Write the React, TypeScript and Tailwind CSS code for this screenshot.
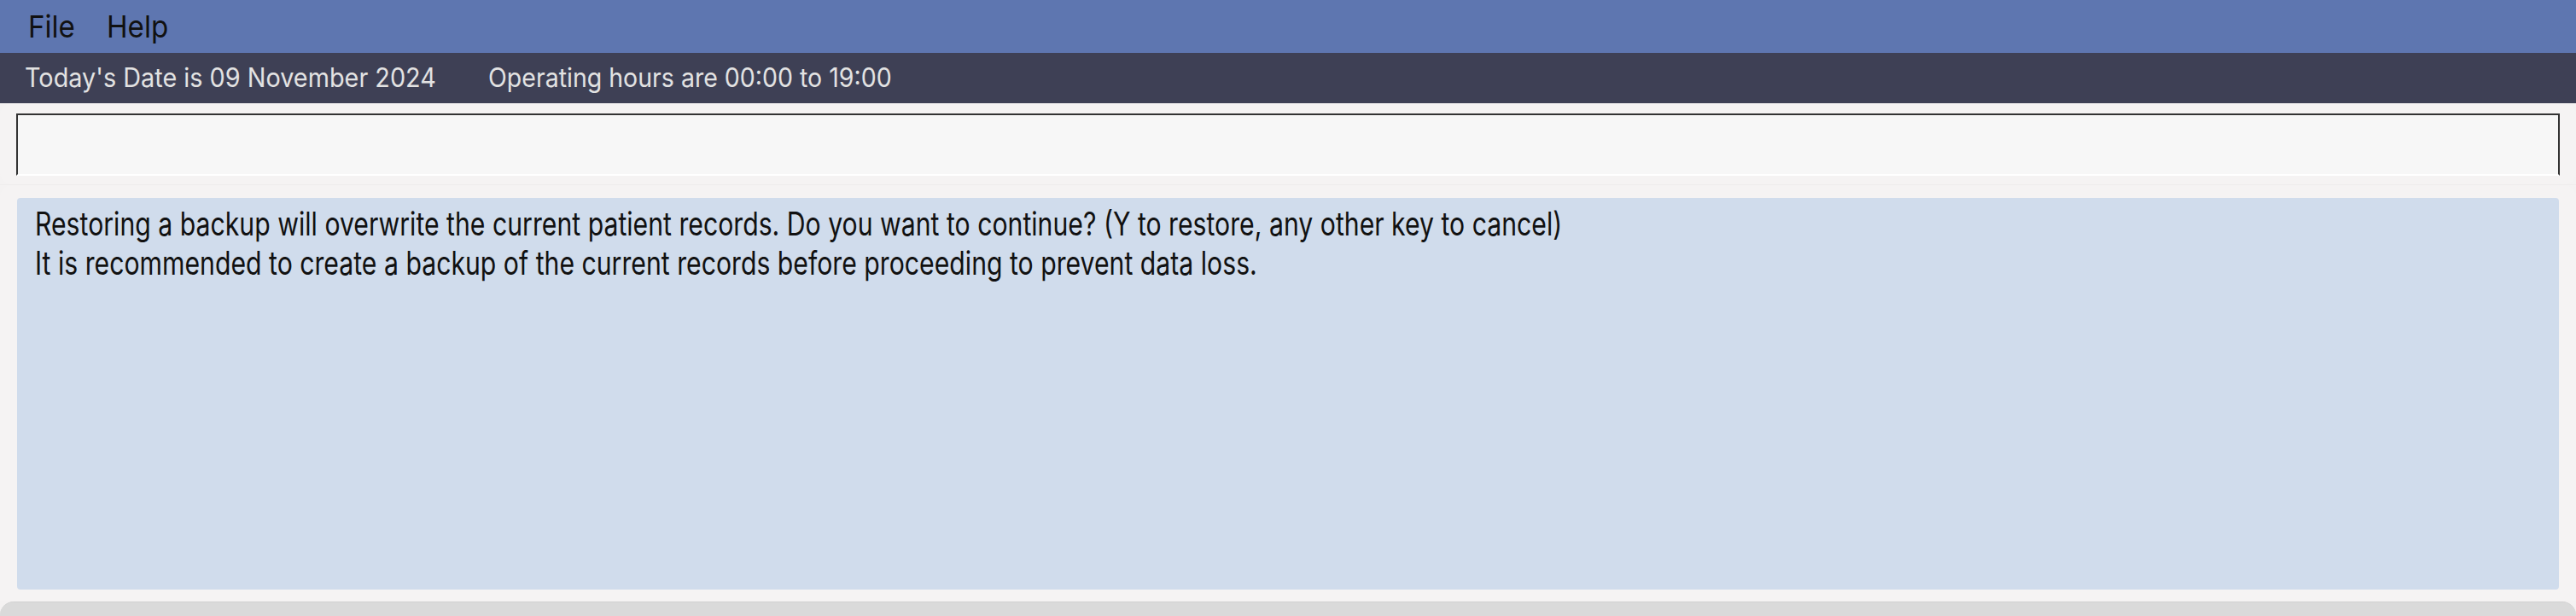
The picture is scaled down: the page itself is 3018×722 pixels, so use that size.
export default function App() {
  const font = { fontFamily: 'Inter, "Noto Sans", sans-serif' };

  return (
    <div className="w-[3018px] h-[722px] flex flex-col bg-[#f4f2f2] overflow-hidden" style={font}>
      {/* menu bar */}
      <div className="h-[62px] shrink-0 bg-[#5e76b0] flex items-center pl-[33px] text-[36px] text-[#111111]">
        <span className="w-[92px] inline-block origin-left scale-x-[0.92]">File</span>
        <span className="inline-block origin-left scale-x-[0.92]">Help</span>
      </div>

      {/* status bar */}
      <div className="h-[59px] shrink-0 bg-[#3e4055] flex items-center pl-[29px] text-[31px] text-[#e2e2e2]">
        <span className="w-[543px] shrink-0">
          <span className="inline-block whitespace-nowrap origin-left scale-x-[0.93]">Today's Date is 09 November 2024</span>
        </span>
        <span className="inline-block whitespace-nowrap origin-left scale-x-[0.92]">Operating hours are 00:00 to 19:00</span>
      </div>

      {/* command box */}
      <div className="shrink-0 pt-[12px] px-[19px] pb-[10px] rounded-[14px] bg-[#f5f3f3]">
        <div className="h-[73px] bg-[#f7f7f7] border-t-[2px] border-x-[2px] border-b-[2px] border-t-[#333333] border-x-[#333333] border-b-white" />
      </div>

      <div className="h-[1px] shrink-0 bg-[#eeecec]" />

      {/* result display */}
      <div className="flex-1 flex flex-col pt-[15px] px-[20px] pb-[14px] rounded-t-[14px] bg-[#f5f3f3]">
        <div className="flex-1 bg-[#d0dcec] rounded-[4px] pl-[21px] pt-[7px] text-[38px] leading-[46px] text-[#111111]">
          <div className="whitespace-nowrap origin-left scale-x-[0.795]">
            Restoring a backup will overwrite the current patient records. Do you want to continue? (Y to restore, any other key to cancel)
          </div>
          <div className="whitespace-nowrap origin-left scale-x-[0.795]">
            It is recommended to create a backup of the current records before proceeding to prevent data loss.
          </div>
        </div>
      </div>

      {/* status footer */}
      <div className="h-[17px] shrink-0 bg-[#dadada] rounded-t-[16px] border-t border-[#d2d2d2]" />
    </div>
  );
}
